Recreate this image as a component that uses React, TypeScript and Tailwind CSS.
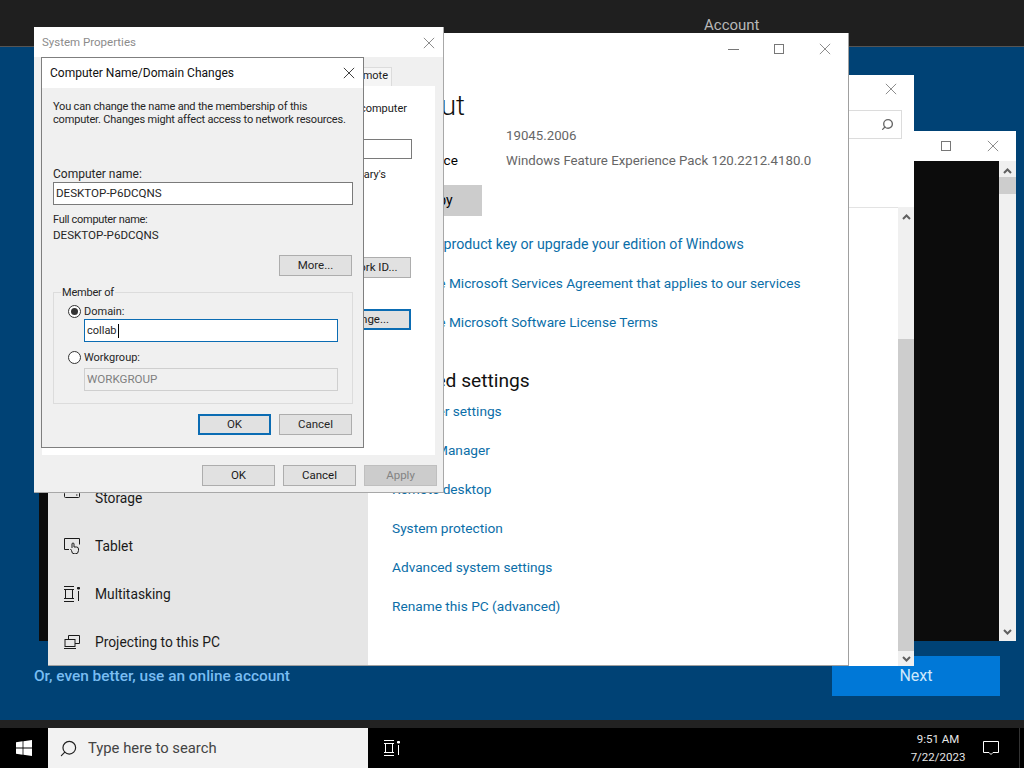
import { Search } from "lucide-react";
import type { ReactNode } from "react";

function CloseIcon({ className = "text-[#7a7a7a]", size = 14 }: { className?: string; size?: number }) {
  return (
    <svg width={size} height={size} viewBox="0 0 14 14" className={className} fill="none" stroke="currentColor" strokeWidth="1">
      <path d="M1 1l12 12M13 1L1 13" />
    </svg>
  );
}

function MaxIcon() {
  return <div className="h-[10px] w-[10px] border border-[#777]" />;
}

function Chevron({ up = false }: { up?: boolean }) {
  return (
    <svg width="9" height="6" viewBox="0 0 9 6" fill="none" stroke="#606060" strokeWidth="2">
      <path d={up ? "M1 5l3.500-3.500L8 5" : "M1 1l3.500 3.500L8 1"} />
    </svg>
  );
}

function Btn({ children, variant = "normal", className = "w-[73px]" }: { children: ReactNode; variant?: "normal" | "focus" | "off"; className?: string }) {
  const look =
    variant === "focus"
      ? "border-2 border-[#0b6cb3] bg-[#e1e1e1]"
      : variant === "off"
        ? "border border-[#bfbfbf] bg-[#cccccc] text-[#838383]"
        : "border border-[#adadad] bg-[#e1e1e1]";
  return <div className={`flex h-[21px] items-center justify-center text-[11.500px] ${look} ${className}`}>{children}</div>;
}

function Radio({ on = false }: { on?: boolean }) {
  return (
    <div className="flex h-[13px] w-[13px] items-center justify-center rounded-full border border-[#333] bg-white">
      {on && <div className="h-[7px] w-[7px] rounded-full bg-[#333]" />}
    </div>
  );
}

function StorageIcon() {
  return (
    <svg width="16" height="16" viewBox="0 0 16 16" fill="none" stroke="#1a1a1a">
      <rect x="0.500" y="2.500" width="15" height="5" rx="1" />
      <path d="M12 5h1.500" />
    </svg>
  );
}

function TabletIcon() {
  return (
    <svg width="16" height="16" viewBox="0 0 16 16" fill="none" stroke="#1a1a1a">
      <path d="M5 11.500H.500V.500h15v6" />
      <path d="M8 10V6a1 1 0 012 0v3h2.500a2 2 0 012 2v1.500a3.500 3.500 0 01-7 0L6.500 11" fill="#e6e6e6" />
    </svg>
  );
}

function MultitaskIcon() {
  return (
    <svg width="16" height="16" viewBox="0 0 16 16" fill="none" stroke="#1a1a1a">
      <path d="M0 .500h10M0 15.500h10M0 3.500h10M0 12.500h10M1.500 3.500v9M8.500 3.500v9M14.500 5v10" />
      <path d="M13.500 1.500h2v1.500h-2z" fill="#1a1a1a" />
    </svg>
  );
}

function ProjectIcon() {
  return (
    <svg width="16" height="16" viewBox="0 0 16 16" fill="none" stroke="#1a1a1a">
      <path d="M4.500 5V1.500h11v8H11" />
      <rect x="1" y="5.500" width="10" height="7" />
      <path d="M0 14.500h12" />
    </svg>
  );
}

function TaskViewIcon() {
  return (
    <svg width="16" height="16" viewBox="0 0 16 16" fill="none" stroke="white">
      <path d="M0 .500h10M0 15.500h10M0 3.500h10M0 12.500h10M1.500 3.500v9M8.500 3.500v9M14.500 5v10" />
      <path d="M13.500 1.500h2v1.500h-2z" fill="white" />
    </svg>
  );
}

function NavRow({ icon, label }: { icon?: ReactNode; label: string }) {
  return (
    <div className="flex h-[48px] shrink-0 items-center gap-[15px] pl-[16px] text-[13.800px] text-[#1a1a1a]">
      <span className="flex h-4 w-4 items-center justify-center">{icon}</span>
      {label}
    </div>
  );
}

function SettingsLink({ children, className = "text-[13.700px]" }: { children: ReactNode; className?: string }) {
  return <div className={`h-[39px] leading-[22px] text-[#0b6ea8] ${className}`}>{children}</div>;
}

function BlackWindow() {
  return (
    <div className="absolute left-[39px] top-[131px] flex h-[510px] w-[977px] flex-col bg-white">
      <div className="flex h-[30px] shrink-0 items-center justify-end gap-[36px] pr-[17px]">
        <MaxIcon />
        <CloseIcon size={12} />
      </div>
      <div className="flex flex-1">
        <div className="flex-1 bg-[#0c0c0c]" />
        <div className="flex w-[17px] flex-col items-center bg-[#f0f0f0] pt-[7px]">
          <Chevron up />
          <div className="mt-[3px] h-[17px] w-full bg-[#cdcdcd]" />
          <div className="flex-1" />
          <div className="mb-[6px]"><Chevron /></div>
        </div>
      </div>
    </div>
  );
}

function BackSettingsWindow() {
  return (
    <div className="absolute left-[48px] top-[75px] flex h-[591px] w-[866px] flex-col bg-white">
      <div className="flex h-[28px] shrink-0 items-center justify-end pr-[17px]">
        <CloseIcon size={12} />
      </div>
      <div className="flex justify-end pr-[12px] pt-[7px]">
        <div className="flex h-[29px] w-[300px] items-center justify-end border border-[#dcdcdc] pr-[7px]">
          <Search size={13} strokeWidth={2.500} className="-scale-x-100 text-[#666]" />
        </div>
      </div>
      <div className="flex flex-1 justify-end pt-[68px]">
        <div className="flex-1 border-t border-[#e3e3e3]" />
        <div className="flex w-[16px] flex-col items-center bg-[#f0f0f0] pt-[7px]">
          <Chevron up />
          <div className="mt-[119px] w-full flex-1 bg-[#cdcdcd]" />
          <div className="flex h-[15px] w-full items-center justify-center"><Chevron /></div>
        </div>
      </div>
    </div>
  );
}

function AboutWindow() {
  return (
    <div className="absolute left-[48px] top-[33px] flex h-[633px] w-[801px] overflow-hidden border-b border-r border-[#a0a0a0] bg-white">
      <div className="-mb-px flex w-[320px] flex-col justify-end bg-[#e6e6e6]">
        <NavRow label="Notifications & actions" />
        <NavRow label="Focus assist" />
        <NavRow label="Power & sleep" />
        <NavRow icon={<StorageIcon />} label="Storage" />
        <NavRow icon={<TabletIcon />} label="Tablet" />
        <NavRow icon={<MultitaskIcon />} label="Multitasking" />
        <NavRow icon={<ProjectIcon />} label="Projecting to this PC" />
      </div>
      <div className="flex flex-1 flex-col">
        <div className="flex h-[32px] items-center justify-end gap-[35px] pr-[17px]">
          <div className="h-px w-[11px] bg-[#777]" />
          <MaxIcon />
          <CloseIcon size={12} />
        </div>
        <div className="pl-[24px]">
          <div className="mt-[24px] text-[28px] font-light leading-[34px] text-[#111]">About</div>
          <div className="flex text-[13.500px] leading-[25px]">
            <div className="w-[114px]">Version</div>
            <div className="text-[13.250px] text-[#666]">19045.2006</div>
          </div>
          <div className="flex text-[13.500px] leading-[25px]">
            <div className="w-[114px]">Experience</div>
            <div className="text-[13.250px] text-[#666]">Windows Feature Experience Pack 120.2212.4180.0</div>
          </div>
          <div className="mt-[12px] flex h-[31px] w-[90px] items-center justify-center bg-[#cccccc] text-[14px]">Copy</div>
          <div className="mt-[17px]">
            <SettingsLink className="text-[14.200px]">Change product key or upgrade your edition of Windows</SettingsLink>
            <SettingsLink>Read the Microsoft Services Agreement that applies to our services</SettingsLink>
            <SettingsLink>Read the Microsoft Software License Terms</SettingsLink>
          </div>
          <div className="mt-[16px] text-[19.200px] leading-[30px] text-[#111]">Related settings</div>
          <div className="mt-[4px]">
            <SettingsLink>BitLocker settings</SettingsLink>
            <SettingsLink>Device Manager</SettingsLink>
            <SettingsLink>Remote desktop</SettingsLink>
            <SettingsLink>System protection</SettingsLink>
            <SettingsLink>Advanced system settings</SettingsLink>
            <SettingsLink>Rename this PC (advanced)</SettingsLink>
          </div>
        </div>
      </div>
    </div>
  );
}

function SystemProperties() {
  return (
    <div className="absolute left-[34px] top-[27px] flex h-[466px] w-[410px] flex-col border-b border-r border-[#a8a8a8] bg-[#f0f0f0] text-[11.500px] text-[#1a1a1a]">
      <div className="flex h-[30px] shrink-0 items-center justify-between bg-white pl-[8px] pr-[8px] pt-px text-[#8c8c8c]">
        System Properties
        <CloseIcon size={12} />
      </div>
      <div className="flex justify-end pr-[51px] pt-[10px]">
        <div className="h-[19px] w-[60px] border border-b-0 border-[#dcdcdc] bg-[#f5f5f5] pr-[3px] text-right text-[11px] leading-[16px]">Remote</div>
      </div>
      <div className="mx-[8px] flex h-[369px] flex-col bg-white pl-[200px] pr-[23px]">
        <div className="pr-[5px] pt-[13px] text-right text-[11px] leading-[20px]">computer</div>
        <div className="mt-[20px] h-[20px] w-full border border-[#7a7a7a]" />
        <div className="mt-[8px] text-right text-[11px] leading-[16px]"><span className="mr-[26px]">Mary's</span></div>
        <div className="mt-[74px] flex justify-end pr-px"><Btn className="w-[92px]">Network ID...</Btn></div>
        <div className="mt-[31px] flex justify-end pr-px"><Btn variant="focus" className="w-[92px]">Change...</Btn></div>
      </div>
      <div className="flex justify-end gap-[8px] pr-[6px] pt-[10px]">
        <Btn>OK</Btn>
        <Btn>Cancel</Btn>
        <Btn variant="off">Apply</Btn>
      </div>
    </div>
  );
}

function NameChangesDialog() {
  return (
    <div className="absolute left-[41px] top-[57px] flex h-[391px] w-[323px] flex-col border border-[#7f7f7f] bg-[#f0f0f0] text-[11px] leading-[13px] text-[#262626]">
      <div className="flex h-[30px] shrink-0 items-center justify-between bg-white pl-[8px] pr-[8px] text-[12px] text-[#111]">
        Computer Name/Domain Changes
        <CloseIcon className="text-[#222]" size={12} />
      </div>
      <div className="flex flex-1 flex-col pl-[11px] pr-[10px]">
        <div className="mt-[12px] whitespace-nowrap tracking-[-0.18px]">
          You can change the name and the membership of this
          <br />
          computer. Changes might affect access to network resources.
        </div>
        <div className="mt-[42px] text-[12px]">Computer name:</div>
        <div className="mt-px flex h-[23px] items-center border border-[#7a7a7a] bg-white pl-[2px] text-[11.600px]">DESKTOP-P6DCQNS</div>
        <div className="mt-[8px] tracking-[-0.3px]">Full computer name:</div>
        <div className="mt-[3px] text-[11.600px]">DESKTOP-P6DCQNS</div>
        <div className="mt-[13px] flex justify-end pr-px"><Btn>More...</Btn></div>
        <div className="relative mt-[16px] h-[112px] border border-[#dcdcdc] pl-[14px]">
          <div className="absolute -top-[7px] left-[7px] bg-[#f0f0f0] px-px tracking-[-0.2px]">Member of</div>
          <div className="mt-[12px] flex items-center gap-[3px]"><Radio on />Domain:</div>
          <div className="ml-[16px] mr-[14px] mt-[1px] flex h-[23px] items-center border border-[#0b6cb3] bg-white pl-[2px]">
            collab<span className="ml-px h-[14px] w-px bg-black" />
          </div>
          <div className="mt-[9px] flex items-center gap-[3px]"><Radio />Workgroup:</div>
          <div className="ml-[16px] mr-[14px] mt-[4px] flex h-[23px] items-center border border-[#cfcfcf] bg-[#f0f0f0] pl-[2px] text-[11.600px] text-[#808080]">WORKGROUP</div>
        </div>
        <div className="mt-[10px] flex justify-end gap-[8px] pr-px">
          <Btn variant="focus">OK</Btn>
          <Btn>Cancel</Btn>
        </div>
      </div>
    </div>
  );
}

export default function App() {
  return (
    <div className="relative flex h-[768px] w-[1024px] flex-col overflow-hidden bg-black font-['Roboto',sans-serif]">
      <div className="h-[47px] shrink-0 border-b border-[#555] bg-[#1f1f1f] pl-[704px] pt-[14px] text-[15px] leading-[22px] text-[#b8b8b8]">Account</div>

      <div className="flex flex-1 items-end justify-between bg-[#004275] pb-[24px] pl-[34px] pr-[24px]">
        <div className="flex h-[38px] items-center text-[15.400px] font-medium text-[#79bdf2]">Or, even better, use an online account</div>
        <div className="flex h-[40px] w-[168px] items-center justify-center bg-[#0078d7] text-[16px] text-[#cfe8fb]">Next</div>
      </div>

      <div className="h-[8px] shrink-0 bg-[#222]" />

      <div className="flex h-[40px] shrink-0 items-center bg-black text-white">
        <div className="flex h-full w-[48px] items-center justify-center">
          <svg width="16" height="16" viewBox="0 0 16 16" fill="white">
            <path d="M0 2.200l6.600-.9v6.300H0zM7.400 1.200L16 0v7.600H7.400zM0 8.400h6.600v6.300L0 13.800zM7.400 8.400H16V16l-8.600-1.200z" />
          </svg>
        </div>
        <div className="flex h-full w-[320px] items-center gap-[10px] bg-[#f2f2f2] pl-[11px] text-[14.800px] text-[#444]">
          <Search size={19} strokeWidth={1.500} className="-scale-x-100 text-[#222]" />
          Type here to search
        </div>
        <div className="ml-[16px]"><TaskViewIcon /></div>
        <div className="flex-1" />
        <div className="flex w-[90px] flex-col items-center text-[11.500px] leading-[18px] text-[#e6e6e6]">
          <div>9:51 AM</div>
          <div>7/22/2023</div>
        </div>
        <div className="mr-[20px] flex w-[16px] justify-center">
          <svg width="16" height="16" viewBox="0 0 16 16" fill="none" stroke="white">
            <path d="M.500 1.500h15v11H10l-2 2-2-2H.500z" />
          </svg>
        </div>
        <div className="h-full w-px bg-[#333]" />
        <div className="w-[4px]" />
      </div>

      <BlackWindow />
      <BackSettingsWindow />
      <AboutWindow />
      <SystemProperties />
      <NameChangesDialog />
    </div>
  );
}
